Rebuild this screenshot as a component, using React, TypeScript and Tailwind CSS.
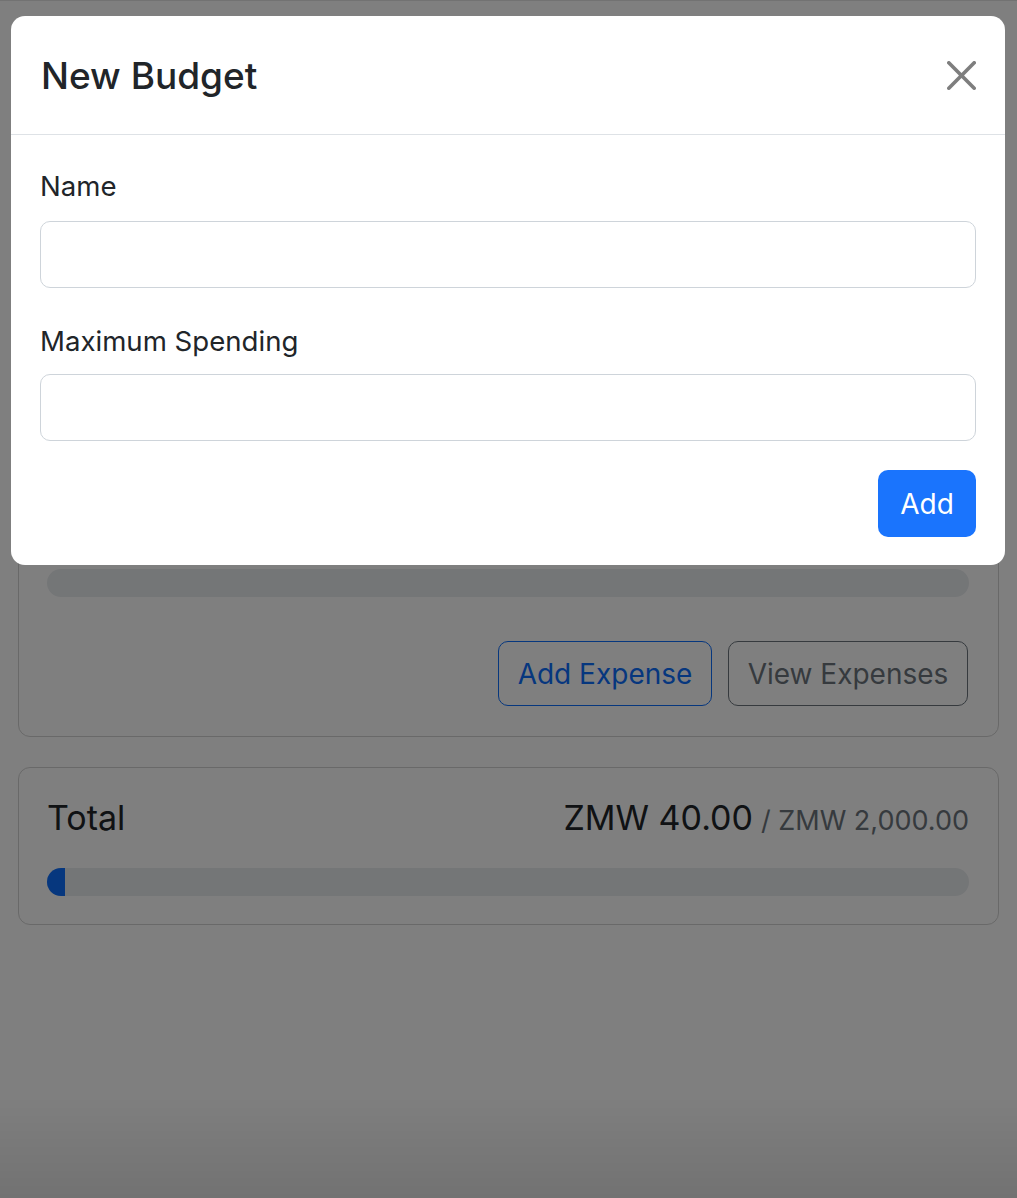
import React from "react";

const font = { fontFamily: "Inter, 'Noto Sans', sans-serif" };

export default function App() {
  return (
    <div className="relative min-h-[1198px] bg-white text-[#212529]" style={font}>
      {/* page behind the modal */}
      <main className="px-[18px] pt-[70px]">
        <header className="mb-[30px] flex h-[69px] items-center gap-4 px-[10px]">
          <h1 className="mr-auto text-[48px] font-medium">Budgets</h1>
          <button className="rounded-[10px] bg-[#0d6efd] px-[22px] py-[12px] text-[28px] text-white">
            Add Budget
          </button>
          <button className="rounded-[10px] border border-[#0d6efd] px-[22px] py-[12px] text-[28px] text-[#0d6efd]">
            Add Expense
          </button>
        </header>

        <div className="flex flex-col gap-[30px]">
          <BudgetCard name="Transport" amount="ZMW 40.00" max="ZMW 1,000.00" percent={4} />
          <BudgetCard name="Groceries" amount="ZMW 0.00" max="ZMW 1,000.00" percent={0} />

          <div className="rounded-[12px] border border-[#d2d2d2] py-[28px] pl-[28px] pr-[29px]">
            <div className="mb-[29px] flex h-[43px] items-baseline justify-between">
              <div className="text-[34px] leading-[43px]">Total</div>
              <div className="flex items-baseline">
                <span className="text-[34px] leading-[43px]">ZMW 40.00</span>
                <span className="ml-[8px] text-[27px] text-[#6c757d]">/ ZMW 2,000.00</span>
              </div>
            </div>
            <Progress percent={2} />
          </div>
        </div>
      </main>

      {/* backdrop */}
      <div className="fixed inset-0 border-t border-black/10 bg-black/50" />
      <div className="fixed inset-x-0 bottom-0 h-[100px] bg-gradient-to-b from-transparent to-black/10" />

      {/* modal */}
      <div className="fixed left-[11px] right-[12px] top-[16px] overflow-hidden rounded-[14px] bg-white">
        <div className="flex h-[119px] items-center justify-between border-b border-[#dee2e6] pl-[30px] pr-[29px]">
          <h5 className="text-[37px] font-medium leading-none">New Budget</h5>
          <button aria-label="Close" className="opacity-50">
            <svg viewBox="0 0 16 16" className="h-[29px] w-[29px]" fill="#000">
              <path d="M.293.293a1 1 0 0 1 1.414 0L8 6.586 14.293.293a1 1 0 1 1 1.414 1.414L9.414 8l6.293 6.293a1 1 0 0 1-1.414 1.414L8 9.414l-6.293 6.293a1 1 0 0 1-1.414-1.414L6.586 8 .293 1.707a1 1 0 0 1 0-1.414z" />
            </svg>
          </button>
        </div>
        <form className="px-[29px] pb-[28px] pt-[30px]">
          <div className="mb-[32px]">
            <label className="mb-[14px] block text-[27.6px] leading-[42px]">Name</label>
            <input className="block h-[67px] w-full rounded-[10px] border border-[#ced4da] px-[21px] text-[28px] outline-none" />
          </div>
          <div className="mb-[29px]">
            <label className="mb-[12px] block text-[27.6px] leading-[42px]">Maximum Spending</label>
            <input className="block h-[67px] w-full rounded-[10px] border border-[#ced4da] px-[21px] text-[28px] outline-none" />
          </div>
          <div className="flex justify-end">
            <button
              type="button"
              className="h-[67px] w-[98px] rounded-[10px] bg-[#1a74fd] text-[28px] text-white"
            >
              Add
            </button>
          </div>
        </form>
      </div>
    </div>
  );
}

function BudgetCard({ name, amount, max, percent }: { name: string; amount: string; max: string; percent: number }) {
  return (
    <div className="rounded-[12px] border border-[#d2d2d2] pb-[30px] pl-[28px] pr-[29px] pt-[28px]">
      <div className="mb-[29px] flex h-[43px] items-baseline justify-between">
        <div className="text-[34px] leading-[43px]">{name}</div>
        <div className="flex items-baseline">
          <span className="text-[34px] leading-[43px]">{amount}</span>
          <span className="ml-[8px] text-[27px] text-[#6c757d]">/ {max}</span>
        </div>
      </div>
      <Progress percent={percent} />
      <div className="mt-[44px] flex justify-end gap-[16px] pr-px">
        <button className="h-[65px] w-[214px] rounded-[10px] border border-[#0d6efd] text-[28px] text-[#0d6efd]">
          Add Expense
        </button>
        <button className="h-[65px] w-[240px] rounded-[10px] border border-[#6c757d] text-[28px] text-[#6c757d]">
          View Expenses
        </button>
      </div>
    </div>
  );
}

function Progress({ percent }: { percent: number }) {
  return (
    <div className="h-[28px] w-full overflow-hidden rounded-full bg-[#e9ecef]">
      <div className="h-full bg-[#0d6efd]" style={{ width: `${percent}%` }} />
    </div>
  );
}
